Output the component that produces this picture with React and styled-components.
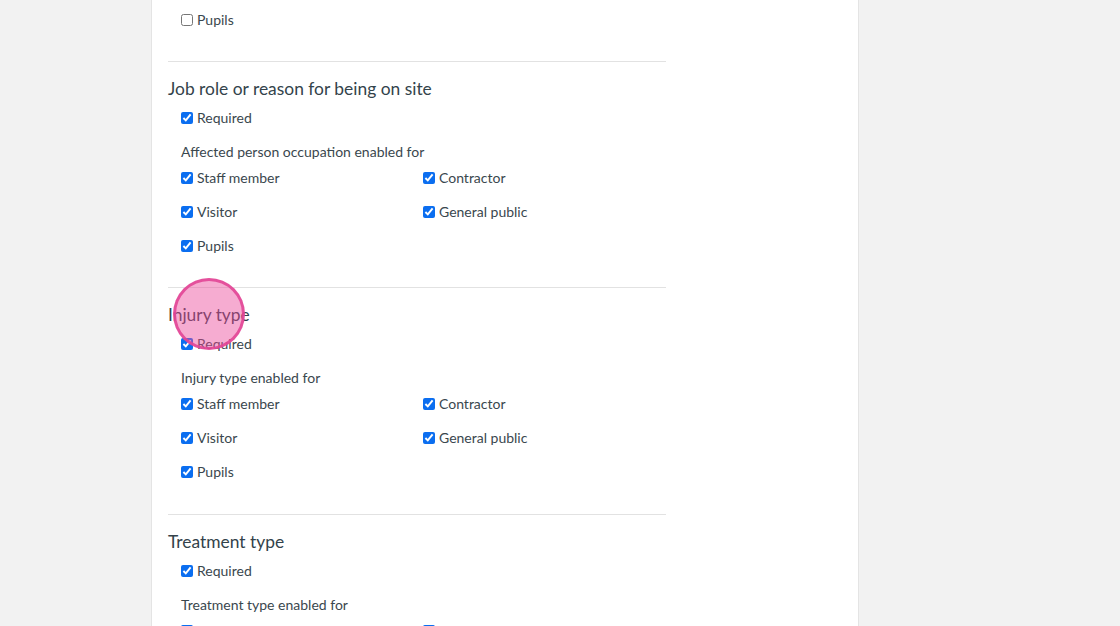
import React from 'react';
import styled, { createGlobalStyle } from 'styled-components';

const GlobalStyle = createGlobalStyle`
  html, body {
    margin: 0;
    padding: 0;
    background: #f2f2f2;
    height: 100%;
    overflow: hidden;
  }
  body {
    font-family: Lato, "Open Sans", sans-serif;
    color: #3a474e;
  }
`;

const Page = styled.div`
  position: relative;
  display: flex;
  padding-left: 151px;
  height: 626px;
`;

const Card = styled.div`
  width: 708px;
  background: #ffffff;
  border-left: 1px solid #e4e4e4;
  border-right: 1px solid #e4e4e4;
  padding: 0 16px;
  box-sizing: border-box;
  height: 100%;
`;

const Content = styled.div`
  width: 498px;
`;

const Section = styled.div`
  border-top: ${(p) => (p.$first ? 'none' : '1px solid #e2e2e2')};
  padding-top: ${(p) => (p.$first ? '10px' : '0')};
  padding-bottom: ${(p) => p.$bottom || 32}px;
`;

const Heading = styled.h3`
  margin: 15px 0 0;
  font-size: 17.4px;
  font-weight: 400;
  line-height: 24px;
  color: #33434b;
`;

const Body = styled.div`
  padding-left: 13px;
`;

const SubLabel = styled.div`
  margin: 14px 0 6px;
  font-size: 14px;
  line-height: 20px;
`;

const Grid = styled.div`
  display: grid;
  grid-template-columns: 242px 242px;
  row-gap: 14px;
`;

const CheckRow = styled.label`
  display: flex;
  align-items: center;
  gap: 4px;
  height: 20px;
  font-size: 14px;
  line-height: 20px;
  margin-top: ${(p) => p.$top || 0}px;
`;

const Box = styled.input`
  width: 12px;
  height: 12px;
  margin: 0;
  accent-color: #0b6ef0;
`;

const ClickMarker = styled.div`
  position: absolute;
  left: 173px;
  top: 278px;
  width: 72px;
  height: 72px;
  box-sizing: border-box;
  border-radius: 50%;
  background: rgba(236, 72, 153, 0.45);
  border: 3px solid rgba(226, 70, 150, 0.9);
  pointer-events: none;
`;

const people = ['Staff member', 'Contractor', 'Visitor', 'General public', 'Pupils'];

function Check({ label, checked = true, top }) {
  return (
    <CheckRow $top={top}>
      <Box type="checkbox" defaultChecked={checked} />
      {label}
    </CheckRow>
  );
}

function FieldSection({ title, enabledLabel, bottom }) {
  return (
    <Section $bottom={bottom}>
      <Heading>{title}</Heading>
      <Body>
        <Check label="Required" top={7} />
        <SubLabel>{enabledLabel}</SubLabel>
        <Grid>
          {people.map((p) => (
            <Check key={p} label={p} />
          ))}
        </Grid>
      </Body>
    </Section>
  );
}

export default function App() {
  return (
    <>
      <GlobalStyle />
      <Page>
        <Card>
          <Content>
            <Section $first $bottom={31}>
              <Body>
                <Check label="Pupils" checked={false} />
              </Body>
            </Section>
            <FieldSection
              title="Job role or reason for being on site"
              enabledLabel="Affected person occupation enabled for"
              bottom={31}
            />
            <FieldSection title="Injury type" enabledLabel="Injury type enabled for" />
            <FieldSection title="Treatment type" enabledLabel="Treatment type enabled for" />
          </Content>
        </Card>
        <ClickMarker />
      </Page>
    </>
  );
}
